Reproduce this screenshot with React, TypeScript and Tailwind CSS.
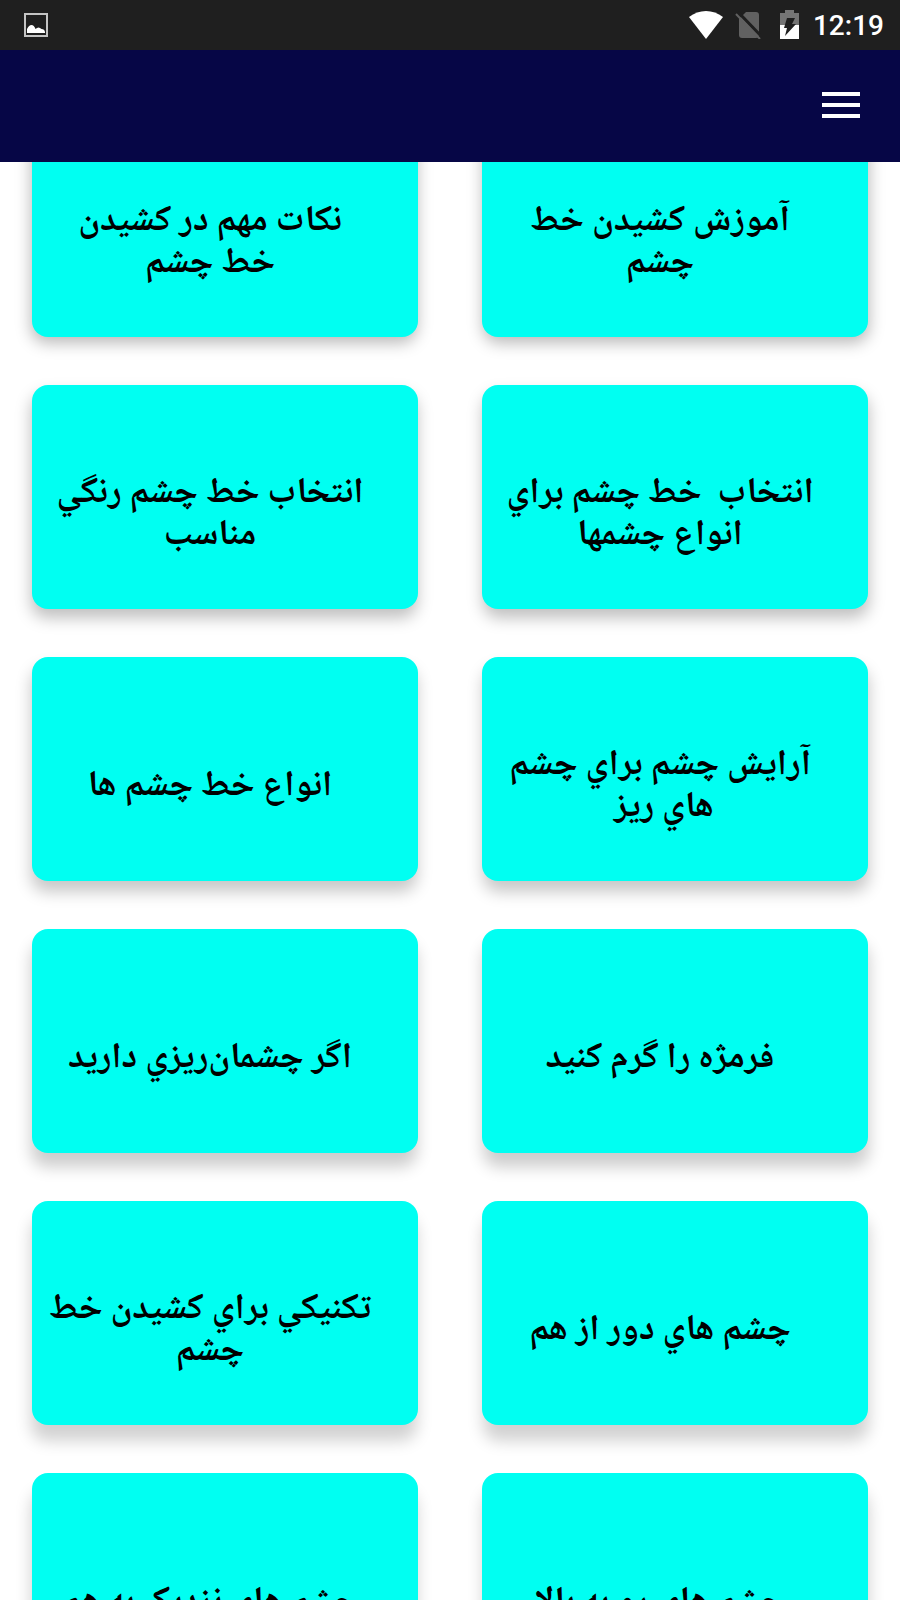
type Topic = { title: string; shadow: string };

const LEFT = [
  "shadow-[-1px_6px_16px_rgba(0,0,0,0.28)]",
  "shadow-[-1px_9px_16px_rgba(0,0,0,0.25)]",
  "shadow-[-1px_11px_16px_rgba(0,0,0,0.22)]",
  "shadow-[-1px_14px_16px_rgba(0,0,0,0.2)]",
  "shadow-[-1px_16px_16px_rgba(0,0,0,0.18)]",
  "shadow-[-1px_18px_16px_rgba(0,0,0,0.18)]",
];

const RIGHT = [
  "shadow-[1px_6px_16px_rgba(0,0,0,0.28)]",
  "shadow-[1px_9px_16px_rgba(0,0,0,0.25)]",
  "shadow-[1px_11px_16px_rgba(0,0,0,0.22)]",
  "shadow-[1px_14px_16px_rgba(0,0,0,0.2)]",
  "shadow-[1px_16px_16px_rgba(0,0,0,0.18)]",
  "shadow-[1px_18px_16px_rgba(0,0,0,0.18)]",
];

const topics: Topic[] = [
  { title: "آموزش كشيدن خط\nچشم", shadow: RIGHT[0] },
  { title: "نكات مهم در كشيدن\nخط چشم", shadow: LEFT[0] },
  { title: "انتخاب  خط چشم براي\nانواع چشمها", shadow: RIGHT[1] },
  { title: "انتخاب خط چشم رنگي\nمناسب", shadow: LEFT[1] },
  { title: "آرايش چشم براي چشم\nهاي ريز ", shadow: RIGHT[2] },
  { title: "انواع خط چشم ها", shadow: LEFT[2] },
  { title: "فرمژه را گرم كنيد", shadow: RIGHT[3] },
  { title: "اگر چشمان‌ريزي داريد", shadow: LEFT[3] },
  { title: "چشم هاي دور از هم", shadow: RIGHT[4] },
  { title: "تكنيكي براي كشيدن خط\nچشم", shadow: LEFT[4] },
  { title: "چشم هاي رو به بالا", shadow: RIGHT[5] },
  { title: "چشم هاي نزديک به هم", shadow: LEFT[5] },
];

function StatusBar() {
  return (
    <div className="flex h-[50px] shrink-0 items-center justify-between bg-[#1f1f1f] pr-4 pl-6 text-white">
      <svg viewBox="0 0 24 24" className="h-6 w-6" aria-label="Screenshot saved" role="img">
        <rect x="1" y="1" width="22" height="22" fill="none" stroke="#c4c4c4" strokeWidth="2" />
        <path d="M3 20v-4q2-4 4.500-4t4 4q3-3 6 0 3 0 3.500 3v1z" fill="#fff" />
      </svg>
      <div className="flex items-center">
        <svg viewBox="0 0 34 28" className="h-7 w-[34px]" aria-label="Wi-Fi" role="img">
          <path d="M0 6C10-2 24-2 34 6L17 28z" fill="#fff" />
        </svg>
        <svg viewBox="0 0 26 28" className="ml-3 h-7 w-[26px]" aria-label="No SIM" role="img">
          <path d="M11 1h10q3 0 3 3v20q0 3-3 3H7q-3 0-3-3V8z" fill="#616161" />
          <path d="M3 1L27 26" stroke="#1f1f1f" strokeWidth="3" />
          <path d="M1 3L25 28" stroke="#616161" strokeWidth="2" />
        </svg>
        <svg viewBox="0 0 20 30" className="ml-[19px] h-[30px] w-5" aria-label="Battery charging" role="img">
          <path d="M5 0h9v3h5v12H0V3h5z" fill="#757575" />
          <path d="M0 15h19v14H0z" fill="#fff" />
          <path d="M7 8h8l-3 6h4L5 26l2-8H4z" fill="#1f1f1f" />
        </svg>
        <span className="ml-[13px] pt-0.5 font-['Roboto',sans-serif] text-[28px] leading-none font-medium">12:19</span>
      </div>
    </div>
  );
}

function TopicCard({ title, shadow }: Topic) {
  return (
    <button
      type="button"
      className={`flex h-56 items-center justify-center rounded-2xl bg-[#00fff2] pt-[38px] pr-[30px] text-center text-[36px] leading-[42px] font-bold whitespace-pre text-black ${shadow}`}
    >
      {title}
    </button>
  );
}

export default function App() {
  return (
    <div className="flex h-screen flex-col overflow-hidden bg-white font-['Noto_Naskh_Arabic','Noto_Sans',sans-serif]">
      <StatusBar />
      <header className="flex h-28 shrink-0 items-center justify-end bg-[#060646] pr-10 pb-0.5">
        <button type="button" aria-label="Menu" className="flex w-[38px] flex-col gap-[7px]">
          <span className="h-1 w-full bg-white" />
          <span className="h-1 w-full bg-white" />
          <span className="h-1 w-full bg-white" />
        </button>
      </header>
      <main className="flex-1 overflow-hidden">
        <div dir="rtl" className="-mt-[49px] grid grid-cols-2 gap-x-16 gap-y-12 px-8">
          {topics.map((topic) => (
            <TopicCard key={topic.title} {...topic} />
          ))}
        </div>
      </main>
    </div>
  );
}
